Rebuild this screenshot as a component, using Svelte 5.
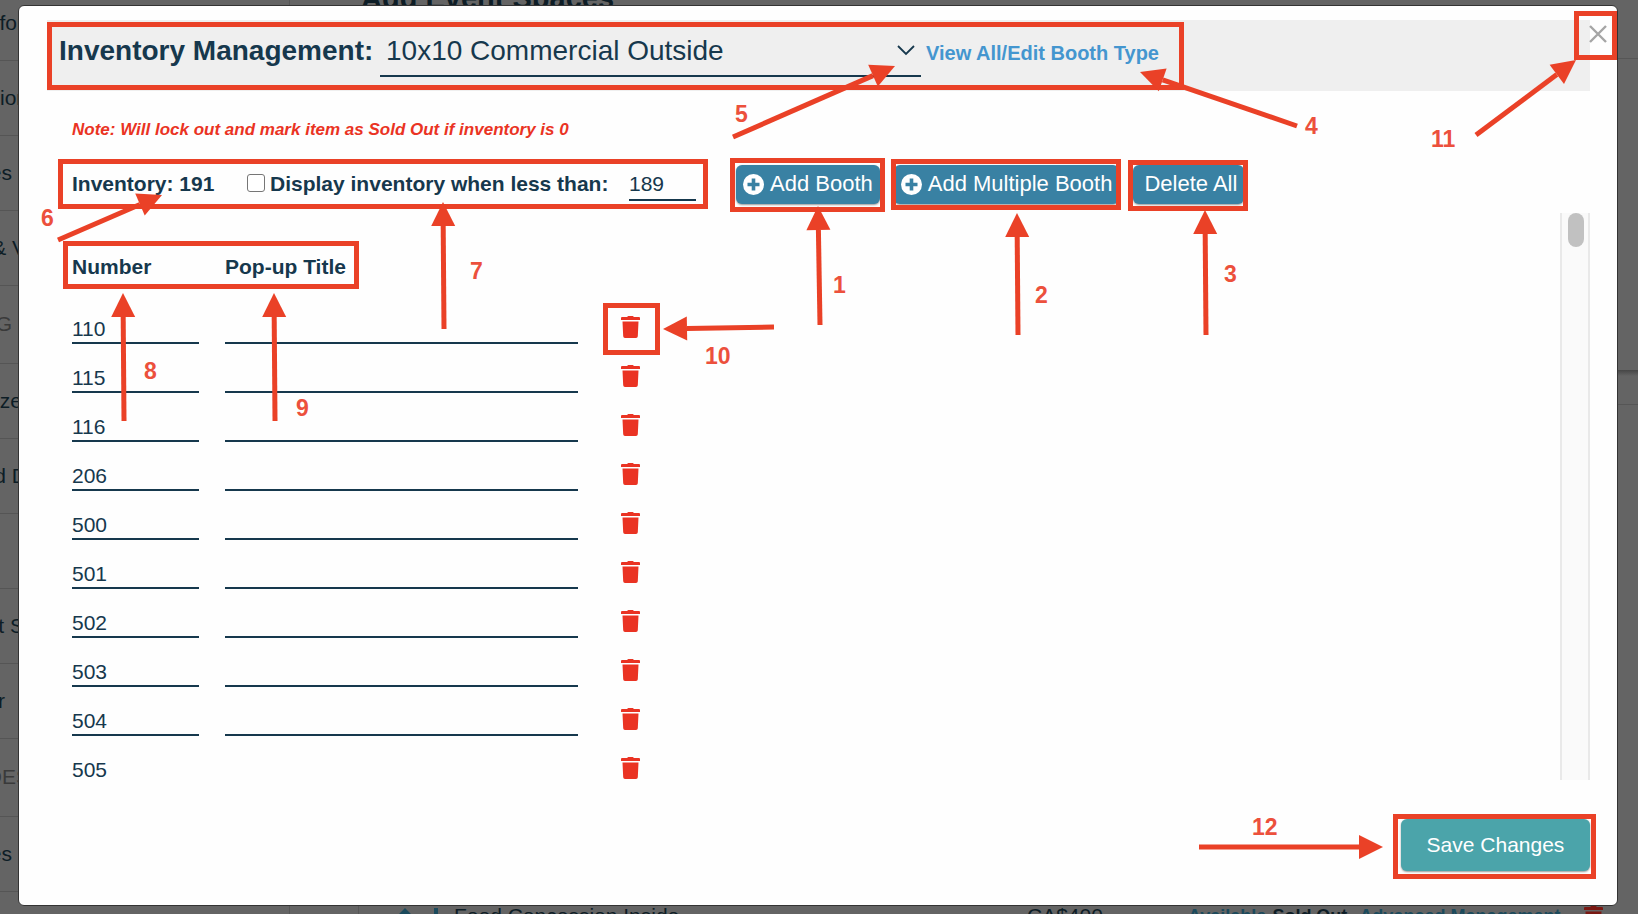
<script>
  const sidebar = [
    { text: 'for', h: 61, end: 24 },
    { text: 'ion', h: 75, end: 28 },
    { text: 'es', h: 75, end: 12 },
    { text: '& V', h: 75, end: 26 },
    { text: 'G', h: 78, end: 12, head: true },
    { text: 'ze', h: 75, end: 22 },
    { text: 'd D', h: 75, end: 27 },
    { text: '', h: 75, end: 0 },
    { text: 't S', h: 75, end: 24 },
    { text: 'r', h: 75, end: 5 },
    { text: 'DES', h: 78, end: 30, head: true },
    { text: 'es', h: 75, end: 12 }
  ];
  let booths = $state(
    ['110', '115', '116', '206', '500', '501', '502', '503', '504', '505'].map((number) => ({ number, title: '' }))
  );
  let threshold = $state('189');
  let limited = $state(false);

  const boxes = [
    [47, 22, 1184, 90], [58, 159, 708, 209], [730, 158, 885, 212], [891, 159, 1121, 210],
    [1128, 160, 1248, 211], [63, 241, 359, 289], [603, 303, 660, 355], [1574, 11, 1617, 60],
    [1393, 814, 1596, 879]
  ];
  const arrows = [
    [820, 325, 818, 206], [1018, 335, 1017, 213], [1206, 335, 1205, 210], [1297, 126, 1140, 72],
    [733, 137, 895, 66], [58, 240, 162, 195], [444, 329, 443, 202], [124, 421, 123, 293],
    [275, 421, 274, 293], [774, 327, 663, 329], [1476, 135, 1576, 60], [1199, 847, 1383, 847]
  ].map(([x1, y1, x2, y2]) => {
    const d = Math.hypot(x2 - x1, y2 - y1);
    const ux = (x2 - x1) / d, uy = (y2 - y1) / d;
    const bx = x2 - ux * 24, by = y2 - uy * 24;
    return {
      x1, y1, bx, by,
      head: `${x2},${y2} ${bx - uy * 12},${by + ux * 12} ${bx + uy * 12},${by - ux * 12}`
    };
  });
  const labels = [
    ['1', 833, 293], ['2', 1035, 303], ['3', 1224, 282], ['4', 1305, 134], ['5', 735, 122], ['6', 41, 226],
    ['7', 470, 279], ['8', 144, 379], ['9', 296, 416], ['10', 705, 364], ['11', 1431, 147], ['12', 1252, 835]
  ];
</script>

{#snippet trash()}
  <svg class="trash" viewBox="0 0 19 22" aria-hidden="true">
    <path d="M6 1 7.2 0h4.6L13 1H18a1 1 0 0 1 1 1v2H0V2a1 1 0 0 1 1-1ZM1.5 5.5h16l-.7 14.8a1.8 1.8 0 0 1-1.8 1.7H4a1.8 1.8 0 0 1-1.8-1.7Z" />
  </svg>
{/snippet}

{#snippet plus()}
  <svg class="plus" viewBox="0 0 21 21" aria-hidden="true">
    <circle cx="10.5" cy="10.5" r="10.5" fill="#fff" />
    <path d="M10.5 4.5v12M4.5 10.5h12" stroke="#3981a3" stroke-width="3.6" />
  </svg>
{/snippet}

<div class="app">
  <div class="page" aria-hidden="true">
    <div class="side">
      {#each sidebar as item}
        <div class={['side-item', item.head && 'head']} style:height="{item.h}px">
          <span style:width="{item.end}px">{item.text}</span>
        </div>
      {/each}
    </div>
    <div class="content">
      <div class="page-title">Add Event Spaces</div>
      <div class="upper"></div>
      <div class="middle"></div>
      <div class="band"></div>
      <div class="lower"></div>
      <div class="space-row">
        <svg class="move" viewBox="0 0 40 12"><path d="M7 0 15 8H-1ZM36 0h4v12h-4Z" fill="#1b4a5c" /></svg>
        <span class="name">Food Concession Inside</span>
        <span class="price">CA$400</span>
        <span class="teal">Available</span>
        <b>Sold Out</b>
        <span class="teal adv">Advanced Management</span>
        {@render trash()}
      </div>
    </div>
  </div>

  <div class="modal" role="dialog" aria-label="Inventory Management">
    <button class="close" aria-label="Close">
      <svg viewBox="0 0 18 18"><path d="m1 1 16 16M17 1 1 17" stroke="#a5a5a5" stroke-width="2.4" /></svg>
    </button>
    <header>
      <label for="booth-type">Inventory Management:</label>
      <div class="select">
        <select id="booth-type"><option>10x10 Commercial Outside</option></select>
        <svg viewBox="0 0 18 11" aria-hidden="true"><path d="m1 1 8 8 8-8" fill="none" stroke="#16384d" stroke-width="1.8" /></svg>
      </div>
      <a href="#booth-types">View All/Edit Booth Type</a>
    </header>

    <p class="note">Note: Will lock out and mark item as Sold Out if inventory is 0</p>

    <div class="toolbar">
      <strong class="count">Inventory: 191</strong>
      <input id="limit" type="checkbox" bind:checked={limited} />
      <label for="limit">Display inventory when less than:</label>
      <input class="field threshold" aria-label="Inventory threshold" bind:value={threshold} />
      <div class="buttons">
        <button class="btn">{@render plus()}Add Booth</button>
        <button class="btn">{@render plus()}Add Multiple Booth</button>
        <button class="btn last">Delete All</button>
      </div>
    </div>

    <div class="list">
      <div class="rows">
        <table>
          <thead><tr><th class="num">Number</th><th class="pop">Pop-up Title</th><th></th></tr></thead>
          <tbody>
            {#each booths as booth}
              <tr>
                <td><input class="field cell" aria-label="Number" bind:value={booth.number} /></td>
                <td><input class="field cell" aria-label="Pop-up Title" bind:value={booth.title} /></td>
                <td><button class="delete" aria-label="Delete booth {booth.number}">{@render trash()}</button></td>
              </tr>
            {/each}
          </tbody>
        </table>
      </div>
      <div class="track"><div class="thumb"></div></div>
    </div>

    <footer><button class="save">Save Changes</button></footer>
  </div>

  <svg class="marks" width="1638" height="914" viewBox="0 0 1638 914">
    {#each boxes as [x, y, r, b]}
      <rect x={x + 2.5} y={y + 2.5} width={r - x - 5} height={b - y - 5} />
    {/each}
    {#each arrows as a}
      <line x1={a.x1} y1={a.y1} x2={a.bx} y2={a.by} />
      <polygon points={a.head} />
    {/each}
    {#each labels as [n, x, y]}
      <text {x} {y}>{n}</text>
    {/each}
  </svg>
</div>

<style>
  :global(body) { margin: 0; }
  .app, .app * { box-sizing: border-box; }
  .app {
    position: relative;
    height: 100vh;
    overflow: hidden;
    background: #646464;
    color: #16384d;
    font: 21px/24px "Liberation Sans", Arial, sans-serif;
  }
  button, input, select { font: inherit; color: inherit; }

  .page { position: absolute; inset: 0; display: flex; color: #0d1d26; }
  .side { width: 290px; border-right: 1px solid #565656; }
  .side-item { display: flex; align-items: flex-end; border-bottom: 1px solid #555; padding-bottom: 25px; }
  .side-item span { display: flex; justify-content: flex-end; white-space: pre; }
  .side-item.head { color: #3a3a3a; padding-bottom: 27px; }
  .content { flex: 1; display: flex; flex-direction: column; padding-left: 68px; }
  .page-title { font-size: 29px; font-weight: bold; line-height: 32px; margin-top: -18px; padding-left: 3px; }
  .upper { height: 45px; border-bottom: 1px solid #565656; }
  .middle { height: 311px; }
  .band { height: 35px; border-bottom: 1px solid #565656; background: linear-gradient(#464646, #646464 6px); }
  .lower { flex: 1; }
  .space-row { display: flex; height: 8px; border-left: 1px solid #565656; padding-left: 39px; white-space: nowrap; line-height: 20px; }
  .move { width: 40px; height: 12px; margin: 2px 16px 0 0; overflow: visible; flex: none; }
  .name { width: 573px; }
  .price { width: 161px; }
  .teal { color: #1b4a5c; font-weight: bold; font-size: 18px; margin-right: 6px; }
  .space-row b { font-size: 18px; margin-right: 12px; }
  .space-row .adv { margin-right: 24px; }
  .space-row .trash { fill: #7a1812; }

  .modal {
    position: absolute;
    inset: 5px 20px 8px 18px;
    display: flex;
    flex-direction: column;
    padding: 14px 27px 34px 28px;
    background: #fefefe;
    border: 1px solid #333;
    border-radius: 6px;
  }
  .close { position: absolute; top: 15px; right: 6px; padding: 4px; border: 0; background: none; }
  .close svg { display: block; width: 18px; height: 18px; }
  header {
    display: flex;
    height: 71px;
    flex: none;
    align-items: flex-start;
    padding: 13px 12px;
    background: #efefef;
    font-size: 28px;
    line-height: 36px;
  }
  header label { font-weight: bold; width: 321px; white-space: nowrap; }
  .select { position: relative; width: 541px; }
  .select select {
    display: block;
    width: 100%;
    height: 44px;
    padding: 0 40px 6px 6px;
    appearance: none;
    border: 0;
    border-bottom: 2px solid #16384d;
    border-radius: 0;
    background: none;
  }
  .select svg { position: absolute; right: 6px; top: 12px; width: 18px; height: 11px; }
  header a { margin-left: 5px; color: #4496cf; font-size: 20px; line-height: 41px; font-weight: bold; text-decoration: none; }
  .note { margin: 27px 25px 0; color: #ea3323; font-size: 17px; line-height: 24px; font-weight: bold; font-style: italic; }
  .toolbar { display: flex; align-items: center; height: 40px; flex: none; margin: 22px 25px 0; }
  .count { width: 175px; }
  .toolbar label { width: 359px; font-weight: bold; white-space: nowrap; }
  input[type="checkbox"] {
    appearance: none;
    width: 18px;
    height: 18px;
    margin: 0 5px 2px 0;
    border: 1px solid #767676;
    border-radius: 3px;
    background: #fff;
  }
  .field {
    display: block;
    width: 100%;
    height: 37px;
    padding: 0;
    border: 0;
    border-bottom: 2px solid #16384d;
    border-radius: 0;
    background: none;
  }
  .cell { padding-top: 8px; }
  .threshold { width: 67px; height: 31px; margin-top: 3px; padding-bottom: 1px; }
  .buttons { display: flex; gap: 14px; margin-left: 40px; font-size: 22px; }
  .btn {
    display: flex;
    align-items: center;
    height: 39px;
    padding: 0 7px;
    gap: 6px;
    border: 0;
    border-radius: 6px;
    background: #3981a3;
    color: #fff;
    box-shadow: 0 1px 2px #0006;
    white-space: nowrap;
  }
  .btn.last { padding-left: 11px; }
  .plus { width: 21px; height: 21px; }
  .list { display: flex; flex: none; height: 567px; margin-top: 9px; }
  .rows { flex: 1; overflow: hidden; padding-left: 25px; }
  table { border-collapse: collapse; table-layout: fixed; width: 600px; }
  th { height: 94px; padding: 14px 0 0; text-align: left; vertical-align: middle; white-space: nowrap; }
  .num { width: 153px; }
  .pop { width: 379px; }
  tr > td { height: 49px; padding: 0 26px 12px 0; vertical-align: top; }
  tr > td:last-child { padding: 9px 0 0 17px; }
  .delete { display: block; padding: 0; border: 0; background: none; }
  .trash { display: block; flex: none; width: 19px; height: 22px; fill: #ea3323; }
  .track { width: 30px; padding-left: 6px; background: #fafafa; border: solid #e9e9e9; border-width: 0 2px; }
  .thumb { width: 16px; height: 34px; border-radius: 8px; background: #c1c1c1; }
  footer { display: flex; justify-content: flex-end; margin-top: auto; }
  .save { width: 189px; height: 52px; border: 0; border-radius: 6px; background: #4ba4aa; color: #fff; box-shadow: 0 1px 2px #0006; }

  .marks { position: absolute; left: 0; top: 0; pointer-events: none; }
  .marks rect, .marks line { fill: none; stroke: #ea4127; stroke-width: 5; }
  .marks polygon { fill: #ea4127; }
  .marks text { fill: #ec503c; font-size: 23px; font-weight: bold; }
</style>
